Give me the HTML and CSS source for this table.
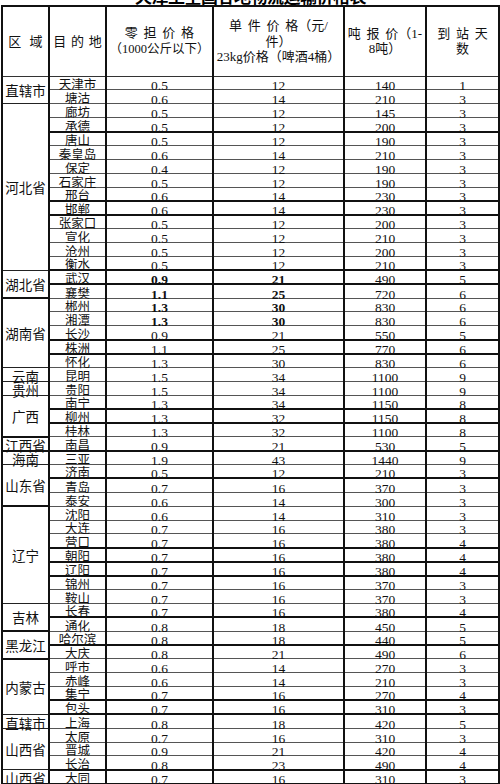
FILE: index.html
```html
<!DOCTYPE html>
<html lang="zh">
<head>
<meta charset="utf-8">
<title>物流运输价格表</title>
<link rel="stylesheet" href="styles.css">
</head>
<body>
<div class="page">
  <div class="title"><span>天津至全国各地物流运输价格表</span></div>
  <table class="sheet">
    <colgroup>
      <col class="c1"><col class="c2"><col class="c3"><col class="c4"><col class="c5"><col class="c6">
    </colgroup>
    <thead>
      <tr>
        <th class="h-area">区 域</th>
        <th class="h-dest">目 的 地</th>
        <th class="h-ltl"><span class="ws">零 担 价 格</span><br><span class="sm">（1000公斤以下）</span></th>
        <th class="h-unit"><span class="ws">单 件 价 格（元/</span><br>件）<br>23kg价格（啤酒4桶）</th>
        <th class="h-ton"><span class="ws">吨 报 价（1-</span><br>8吨）</th>
        <th class="h-days"><span class="ws">到 站 天</span><br>数</th>
      </tr>
    </thead>
    <tbody>
      <tr><td class="rg" rowspan="2">直辖市</td><td>天津市</td><td>0.5</td><td>12</td><td>140</td><td>1</td></tr>
      <tr><td>塘沽</td><td>0.6</td><td>14</td><td>210</td><td>3</td></tr>
      <tr><td class="rg" rowspan="12">河北省</td><td>廊坊</td><td>0.5</td><td>12</td><td>145</td><td>3</td></tr>
      <tr class="tk"><td>承德</td><td>0.5</td><td>12</td><td>200</td><td>3</td></tr>
      <tr><td>唐山</td><td>0.5</td><td>12</td><td>190</td><td>3</td></tr>
      <tr><td>秦皇岛</td><td>0.6</td><td>14</td><td>210</td><td>3</td></tr>
      <tr><td>保定</td><td>0.4</td><td>12</td><td>190</td><td>3</td></tr>
      <tr><td>石家庄</td><td>0.5</td><td>12</td><td>190</td><td>3</td></tr>
      <tr class="tk"><td>邢台</td><td>0.6</td><td>14</td><td>230</td><td>3</td></tr>
      <tr class="tk"><td>邯郸</td><td>0.6</td><td>14</td><td>230</td><td>3</td></tr>
      <tr><td>张家口</td><td>0.5</td><td>12</td><td>200</td><td>3</td></tr>
      <tr><td>宣化</td><td>0.5</td><td>12</td><td>210</td><td>3</td></tr>
      <tr><td>沧州</td><td>0.5</td><td>12</td><td>200</td><td>3</td></tr>
      <tr class="tk"><td>衡水</td><td>0.5</td><td>12</td><td>210</td><td>3</td></tr>
      <tr class="tk"><td class="rg" rowspan="2">湖北省</td><td>武汉</td><td class="b">0.9</td><td class="b">21</td><td>490</td><td>5</td></tr>
      <tr><td>襄樊</td><td class="b">1.1</td><td class="b">25</td><td>720</td><td>6</td></tr>
      <tr><td class="rg" rowspan="5">湖南省</td><td>郴州</td><td class="b">1.3</td><td class="b">30</td><td>830</td><td>6</td></tr>
      <tr><td>湘潭</td><td class="b">1.3</td><td class="b">30</td><td>830</td><td>6</td></tr>
      <tr class="tk"><td>长沙</td><td>0.9</td><td>21</td><td>550</td><td>5</td></tr>
      <tr class="tk"><td>株洲</td><td>1.1</td><td>25</td><td>770</td><td>6</td></tr>
      <tr><td>怀化</td><td>1.3</td><td>30</td><td>830</td><td>6</td></tr>
      <tr><td class="rg one">云南</td><td>昆明</td><td>1.5</td><td>34</td><td>1100</td><td>9</td></tr>
      <tr><td class="rg one">贵州</td><td>贵阳</td><td>1.5</td><td>34</td><td>1100</td><td>9</td></tr>
      <tr class="tk"><td class="rg" rowspan="3">广西</td><td>南宁</td><td>1.3</td><td>34</td><td>1150</td><td>8</td></tr>
      <tr class="tk"><td>柳州</td><td>1.3</td><td>32</td><td>1150</td><td>8</td></tr>
      <tr><td>桂林</td><td>1.3</td><td>32</td><td>1100</td><td>8</td></tr>
      <tr class="tk"><td class="rg one">江西省</td><td>南昌</td><td>0.9</td><td>21</td><td>530</td><td>5</td></tr>
      <tr><td class="rg one">海南</td><td>三亚</td><td>1.9</td><td>43</td><td>1440</td><td>9</td></tr>
      <tr class="tk"><td class="rg" rowspan="3">山东省</td><td>济南</td><td>0.5</td><td>12</td><td>210</td><td>3</td></tr>
      <tr><td>青岛</td><td>0.7</td><td>16</td><td>370</td><td>3</td></tr>
      <tr><td>泰安</td><td>0.6</td><td>14</td><td>300</td><td>3</td></tr>
      <tr><td class="rg" rowspan="7">辽宁</td><td>沈阳</td><td>0.6</td><td>14</td><td>310</td><td>3</td></tr>
      <tr><td>大连</td><td>0.7</td><td>16</td><td>380</td><td>3</td></tr>
      <tr class="tk"><td>营口</td><td>0.7</td><td>16</td><td>380</td><td>4</td></tr>
      <tr class="tk"><td>朝阳</td><td>0.7</td><td>16</td><td>380</td><td>4</td></tr>
      <tr class="tk"><td>辽阳</td><td>0.7</td><td>16</td><td>380</td><td>4</td></tr>
      <tr><td>锦州</td><td>0.7</td><td>16</td><td>370</td><td>3</td></tr>
      <tr><td>鞍山</td><td>0.7</td><td>16</td><td>370</td><td>3</td></tr>
      <tr class="tk"><td class="rg" rowspan="2">吉林</td><td>长春</td><td>0.7</td><td>16</td><td>380</td><td>4</td></tr>
      <tr><td>通化</td><td>0.8</td><td>18</td><td>450</td><td>5</td></tr>
      <tr class="tk"><td class="rg" rowspan="2">黑龙江</td><td>哈尔滨</td><td>0.8</td><td>18</td><td>440</td><td>5</td></tr>
      <tr><td>大庆</td><td>0.8</td><td>21</td><td>490</td><td>6</td></tr>
      <tr><td class="rg" rowspan="4">内蒙古</td><td>呼市</td><td>0.6</td><td>14</td><td>270</td><td>3</td></tr>
      <tr><td>赤峰</td><td>0.6</td><td>14</td><td>210</td><td>3</td></tr>
      <tr class="tk"><td>集宁</td><td>0.7</td><td>16</td><td>270</td><td>4</td></tr>
      <tr class="tk"><td>包头</td><td>0.7</td><td>16</td><td>310</td><td>3</td></tr>
      <tr><td class="rg one">直辖市</td><td>上海</td><td>0.8</td><td>18</td><td>420</td><td>5</td></tr>
      <tr><td class="rg" rowspan="3">山西省</td><td>太原</td><td>0.7</td><td>16</td><td>310</td><td>3</td></tr>
      <tr><td>晋城</td><td>0.9</td><td>21</td><td>420</td><td>4</td></tr>
      <tr class="tk"><td>长治</td><td>0.8</td><td>23</td><td>490</td><td>4</td></tr>
      <tr class="tk"><td class="rg one">山西省</td><td>大同</td><td>0.7</td><td>16</td><td>310</td><td>3</td></tr>
    </tbody>
  </table>
  <div class="scanedge"></div>
</div>
</body>
</html>
```

FILE: styles.css
```css
html, body {
  margin: 0;
  padding: 0;
  background: #fff;
}
body {
  width: 500px;
  height: 784px;
  overflow: hidden;
}
.page {
  padding-left: 1px;
}
.title {
  height: 5px;
  overflow: hidden;
  display: flex;
  justify-content: center;
  align-items: flex-end;
}
.title span {
  font: bold 17px/19px "Noto Sans CJK SC", sans-serif;
  color: #000;
  white-space: nowrap;
  letter-spacing: -0.5px;
}
.sheet {
  border-collapse: collapse;
  table-layout: fixed;
  width: 497px;
  font-family: "Liberation Serif", "Noto Sans CJK SC", serif;
  font-size: 13.5px;
  color: #111;
  border-top: 2px solid #111;
}
.c1 { width: 47px; }
.c2 { width: 57px; }
.c3 { width: 107px; }
.c4 { width: 131px; }
.c5 { width: 82px; }
.c6 { width: 73px; }

.sheet th, .sheet td {
  border-top: 1px solid #555;
  border-bottom: 1px solid #555;
  border-left: 2px solid #111;
  border-right: 2px solid #111;
  padding: 0;
  text-align: center;
  white-space: nowrap;
}
.sheet thead tr {
  height: 70px;
}
.sheet thead th {
  font-weight: normal;
  font-size: 13px;
  line-height: 15.5px;
  vertical-align: middle;
  border-bottom: 1px solid #333;
}
.h-area { word-spacing: 5px; }
.h-dest { word-spacing: 1.5px; }
.ws { word-spacing: 2.5px; }
.sm { font-size: 12.5px; }

.sheet tbody tr {
  height: 13.88px;
}
.sheet tbody td {
  font-family: "Liberation Serif", serif;
  line-height: 6px;
  vertical-align: bottom;
}
.sheet tbody td:nth-last-child(5) {
  font-family: "Noto Sans CJK SC", sans-serif;
  font-size: 12.5px;
  line-height: 10px;
}
.sheet tbody tr.tk td {
  border-bottom: 2px solid #111;
}
.sheet tbody td.rg {
  font-family: "Noto Sans CJK SC", sans-serif;
  vertical-align: middle;
  font-size: 13.5px;
  line-height: 14px;
  border-bottom: 1px solid #222;
}
.sheet tbody td.rg.one {
  vertical-align: bottom;
  line-height: 10px;
}
.sheet tbody td.b {
  font-weight: bold;
}
.scanedge {
  height: 4px;
  background: #b5b5b5;
}
```
